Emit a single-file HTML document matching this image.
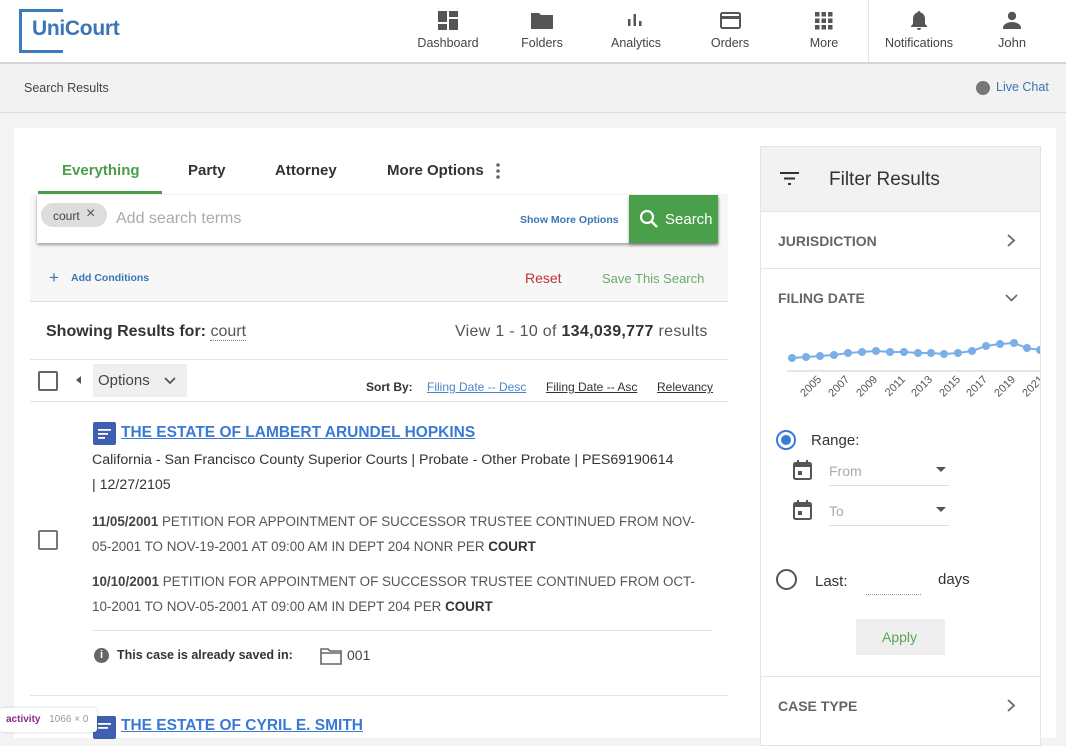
<!DOCTYPE html>
<html><head><meta charset="utf-8"><style>
*{box-sizing:border-box;margin:0;padding:0}
body{width:1066px;height:732px;overflow:hidden;background:#f4f4f4;font-family:"Liberation Sans",sans-serif;color:#333;position:relative}
.a{position:absolute}
.nav{position:absolute;top:0;left:0;width:1066px;height:64px;background:#fff;border-bottom:2px solid #d4d4d4}
.ni{position:absolute;top:36px;font-size:12.5px;color:#444;text-align:center;width:100px}
.card{position:absolute;left:14px;top:128px;width:1042px;height:610px;background:#fff}
</style></head><body>
<div class="nav">
 <div class="a" style="left:19px;top:9px;width:44px;height:44px;border:3px solid #3a7bbf;border-right:none"></div>
 <div class="a" style="left:26px;top:12px;width:40px;height:38px;background:#fff"></div>
 <div class="a" style="left:32px;top:17px;font-size:21px;font-weight:bold;color:#3a75b5;letter-spacing:-0.3px">UniCourt</div>
 <svg class="a" style="left:438px;top:11px" width="20" height="20" viewBox="0 0 20 20" fill="#555"><rect x="0" y="0" width="9" height="11"/><rect x="11" y="0" width="9" height="6"/><rect x="0" y="13" width="9" height="6"/><rect x="11" y="8" width="9" height="11"/></svg>
 <div class="ni" style="left:398px">Dashboard</div>
 <svg class="a" style="left:531px;top:11px" width="22" height="18" viewBox="0 0 22 18" fill="#555"><path d="M0 2h8l2 2h12v14H0z"/></svg>
 <div class="ni" style="left:492px">Folders</div>
 <svg class="a" style="left:627px;top:13px" width="16" height="14" viewBox="0 0 16 14" fill="#555"><rect x="1" y="6" width="2.5" height="7"/><rect x="6.5" y="1" width="2.5" height="12"/><rect x="12" y="8" width="2.5" height="5"/></svg>
 <div class="ni" style="left:586px">Analytics</div>
 <svg class="a" style="left:720px;top:12px" width="21" height="17" viewBox="0 0 21 17"><rect x="1" y="1" width="19" height="15" rx="1.5" fill="none" stroke="#555" stroke-width="2"/><rect x="1" y="4" width="19" height="3" fill="#555"/></svg>
 <div class="ni" style="left:680px">Orders</div>
 <svg class="a" style="left:815px;top:12px" width="18" height="18" viewBox="0 0 18 18" fill="#555"><rect x="0" y="0" width="4.5" height="4.5"/><rect x="6.5" y="0" width="4.5" height="4.5"/><rect x="13" y="0" width="4.5" height="4.5"/><rect x="0" y="6.5" width="4.5" height="4.5"/><rect x="6.5" y="6.5" width="4.5" height="4.5"/><rect x="13" y="6.5" width="4.5" height="4.5"/><rect x="0" y="13" width="4.5" height="4.5"/><rect x="6.5" y="13" width="4.5" height="4.5"/><rect x="13" y="13" width="4.5" height="4.5"/></svg>
 <div class="ni" style="left:774px">More</div>
 <div class="a" style="left:868px;top:0;width:1px;height:62px;background:#e4e4e4"></div>
 <svg class="a" style="left:910px;top:10px" width="18" height="20" viewBox="0 0 18 20" fill="#555"><path d="M9 1c1 0 1.5.7 1.5 1.5C13.5 3.3 15 6 15 9v5l2 2v1H1v-1l2-2V9c0-3 1.5-5.7 4.5-6.5C7.5 1.7 8 1 9 1zM7 18h4a2 2 0 0 1-4 0z"/></svg>
 <div class="ni" style="left:869px">Notifications</div>
 <svg class="a" style="left:1003px;top:11px" width="18" height="18" viewBox="0 0 18 18" fill="#555"><circle cx="9" cy="5" r="4.2"/><path d="M0 17c0-4 5-6 9-6s9 2 9 6v1H0z"/></svg>
 <div class="ni" style="left:962px;top:35px;font-size:13px">John</div>
</div>
<div class="a" style="top:66px;left:0;width:1066px;height:47px;background:#f2f2f2;border-bottom:1px solid #ddd"></div>
<div class="a" style="left:24px;top:81px;font-size:12.5px;color:#444">Search Results</div>
<div class="a" style="left:976px;top:81px;width:14px;height:14px;border-radius:50%;background:#777"></div>
<div class="a" style="left:996px;top:80px;font-size:12.5px;color:#3a75b5">Live Chat</div>

<div class="card"></div>
<div class="a" style="left:62px;top:162px;font-size:15px;font-weight:bold;color:#4a9e4a">Everything</div>
<div class="a" style="left:188px;top:162px;font-size:15px;font-weight:bold;color:#333">Party</div>
<div class="a" style="left:275px;top:162px;font-size:15px;font-weight:bold;color:#333">Attorney</div>
<div class="a" style="left:387px;top:162px;font-size:15px;font-weight:bold;color:#333">More Options</div>
<svg class="a" style="left:495px;top:162px" width="6" height="18"><circle cx="3" cy="3" r="1.8" fill="#666"/><circle cx="3" cy="9" r="1.8" fill="#666"/><circle cx="3" cy="15" r="1.8" fill="#666"/></svg>
<div class="a" style="left:38px;top:191px;width:124px;height:3px;background:#4a9e4a"></div>
<div class="a" style="left:30px;top:194px;width:698px;height:108px;background:#f7f7f7;border-bottom:1px solid #ddd"></div>
<div class="a" style="left:37px;top:195px;width:681px;height:48px;background:#fff;box-shadow:0 2px 3px rgba(0,0,0,.35)"></div>
<div class="a" style="left:41px;top:203px;width:66px;height:24px;border-radius:12px;background:#ddd"></div>
<div class="a" style="left:53px;top:209px;font-size:12px;color:#444">court</div>
<div class="a" style="left:86px;top:205px;font-size:16px;color:#555">×</div>
<div class="a" style="left:116px;top:210px;font-size:16px;color:#aaa">Add search terms</div>
<div class="a" style="left:520px;top:214px;font-size:10.5px;font-weight:bold;color:#3a75b5">Show More Options</div>
<div class="a" style="left:629px;top:195px;width:89px;height:48px;background:#4aa04a;box-shadow:0 2px 3px rgba(0,0,0,.3)"></div>
<svg class="a" style="left:639px;top:209px" width="20" height="20" viewBox="0 0 20 20"><circle cx="8" cy="8" r="6" fill="none" stroke="#fff" stroke-width="2.2"/><path d="M12.5 12.5l5.5 5.5" stroke="#fff" stroke-width="2.4"/></svg>
<div class="a" style="left:665px;top:211px;font-size:15px;color:#fff">Search</div>
<div class="a" style="left:49px;top:268px;font-size:17px;color:#3a75b5">+</div>
<div class="a" style="left:71px;top:272px;font-size:10.5px;font-weight:bold;color:#3a75b5">Add Conditions</div>
<div class="a" style="left:525px;top:270px;font-size:14px;color:#b33">Reset</div>
<div class="a" style="left:602px;top:271px;font-size:13px;color:#6aab6a">Save This Search</div>

<div class="a" style="left:46px;top:323px;font-size:16px;font-weight:bold;color:#333">Showing Results for: <span style="font-weight:normal;color:#555;border-bottom:1px dotted #777">court</span></div>
<div class="a" style="left:455px;top:323px;font-size:16px;color:#555;letter-spacing:.3px">View 1 - 10 of <b style="color:#333">134,039,777</b> results</div>
<div class="a" style="left:30px;top:359px;width:698px;height:1px;background:#e4e4e4"></div>
<div class="a" style="left:38px;top:371px;width:20px;height:20px;border:2px solid #666;border-radius:2px"></div>
<div class="a" style="left:76px;top:376px;width:0;height:0;border:4px solid transparent;border-right:5px solid #555;border-left:0"></div>
<div class="a" style="left:93px;top:364px;width:94px;height:33px;background:#efefef"></div>
<div class="a" style="left:98px;top:372px;font-size:15px;color:#444">Options</div>
<svg class="a" style="left:164px;top:377px" width="12" height="8"><path d="M1 1l5 5 5-5" fill="none" stroke="#555" stroke-width="1.8"/></svg>
<div class="a" style="left:366px;top:380px;font-size:12px;font-weight:bold;color:#333">Sort By:</div>
<div class="a" style="left:427px;top:380px;font-size:12px;color:#4a85c5;text-decoration:underline">Filing Date -- Desc</div>
<div class="a" style="left:546px;top:380px;font-size:12px;color:#333;text-decoration:underline">Filing Date -- Asc</div>
<div class="a" style="left:657px;top:380px;font-size:12px;color:#333;text-decoration:underline">Relevancy</div>
<div class="a" style="left:30px;top:401px;width:698px;height:1px;background:#e4e4e4"></div>

<svg class="a" style="left:93px;top:422px" width="23" height="23" viewBox="0 0 23 23"><rect width="23" height="23" rx="2" fill="#3f5fb0"/><rect x="5" y="7" width="13" height="1.8" fill="#fff"/><rect x="5" y="11" width="10" height="1.8" fill="#fff"/><rect x="5" y="15" width="7" height="1.8" fill="#fff"/></svg>
<div class="a" style="left:121px;top:424px;font-size:15.5px;font-weight:bold;color:#3a7ad5;text-decoration:underline">THE ESTATE OF LAMBERT ARUNDEL HOPKINS</div>
<div class="a" style="left:92px;top:448px;width:624px;font-size:14.2px;line-height:25px;color:#333">California - San Francisco County Superior Courts | Probate - Other Probate | PES69190614<br>| 12/27/2105</div>
<div class="a" style="left:38px;top:530px;width:20px;height:20px;border:2px solid #777;border-radius:2px"></div>
<div class="a" style="left:92px;top:509px;width:610px;font-size:13.4px;line-height:25px;color:#555">
<b style="color:#444">11/05/2001</b> PETITION FOR APPOINTMENT OF SUCCESSOR TRUSTEE CONTINUED FROM NOV-<br>05-2001 TO NOV-19-2001 AT 09:00 AM IN DEPT 204 NONR PER <b style="color:#333">COURT</b></div>
<div class="a" style="left:92px;top:569px;width:610px;font-size:13.4px;line-height:25px;color:#555">
<b style="color:#444">10/10/2001</b> PETITION FOR APPOINTMENT OF SUCCESSOR TRUSTEE CONTINUED FROM OCT-<br>10-2001 TO NOV-05-2001 AT 09:00 AM IN DEPT 204 PER <b style="color:#333">COURT</b></div>
<div class="a" style="left:92px;top:630px;width:620px;height:1px;background:#e4e4e4"></div>
<div class="a" style="left:94px;top:648px;width:15px;height:15px;border-radius:50%;background:#666;color:#fff;font-size:11px;font-weight:bold;text-align:center;line-height:15px">i</div>
<div class="a" style="left:117px;top:648px;font-size:12.5px;font-weight:bold;color:#333">This case is already saved in:</div>
<svg class="a" style="left:320px;top:648px" width="22" height="17"><path d="M1 1h7l2 2h11v13H1z" fill="none" stroke="#666" stroke-width="1.6"/><path d="M1 5h20" stroke="#666" stroke-width="1.4"/></svg>
<div class="a" style="left:347px;top:647px;font-size:14px;color:#444">001</div>
<div class="a" style="left:30px;top:695px;width:698px;height:1px;background:#e4e4e4"></div>
<svg class="a" style="left:93px;top:716px" width="23" height="23" viewBox="0 0 23 23"><rect width="23" height="23" rx="2" fill="#3f5fb0"/><rect x="5" y="7" width="13" height="1.8" fill="#fff"/><rect x="5" y="11" width="10" height="1.8" fill="#fff"/></svg>
<div class="a" style="left:121px;top:717px;font-size:15.5px;font-weight:bold;color:#3a7ad5;text-decoration:underline">THE ESTATE OF CYRIL E. SMITH</div>
<div class="a" style="left:0;top:708px;width:97px;height:24px;background:#fff;border-radius:3px;box-shadow:0 0 3px rgba(0,0,0,.2)"></div>
<div class="a" style="left:6px;top:714px;font-size:10px;font-weight:bold;color:#8a2b8a">activity <span style="font-weight:normal;color:#999;margin-left:6px">1066 × 0</span></div>

<div class="a" style="left:760px;top:146px;width:281px;height:600px;border:1px solid #e4e4e4;background:#fff"></div>
<div class="a" style="left:761px;top:147px;width:279px;height:65px;background:#f2f2f2;border-bottom:1px solid #e4e4e4"></div>
<svg class="a" style="left:780px;top:172px" width="20" height="14"><rect x="0" y="0" width="19" height="2" fill="#333"/><rect x="4" y="5.5" width="11" height="2" fill="#333"/><rect x="8" y="11" width="3" height="2" fill="#333"/></svg>
<div class="a" style="left:829px;top:169px;font-size:19px;color:#333">Filter Results</div>
<div class="a" style="left:778px;top:233px;font-size:14px;font-weight:bold;color:#666">JURISDICTION</div>
<svg class="a" style="left:1006px;top:234px" width="10" height="13"><path d="M2 1l6 5.5L2 12" fill="none" stroke="#666" stroke-width="1.8"/></svg>
<div class="a" style="left:761px;top:268px;width:279px;height:1px;background:#e4e4e4"></div>
<div class="a" style="left:778px;top:290px;font-size:14px;font-weight:bold;color:#666">FILING DATE</div>
<svg class="a" style="left:1005px;top:294px" width="13" height="9"><path d="M1 1l5.5 5.5L12 1" fill="none" stroke="#666" stroke-width="1.6"/></svg>
<svg class="a" style="left:761px;top:330px" width="279" height="80" viewBox="761 330 279 80">
<line x1="787" y1="371" x2="1040" y2="371" stroke="#ccc"/>
<polyline fill="none" stroke="#7aaee6" stroke-width="2" points="792,358 806,357 820,356 834,355 848,353 862,352 876,351 890,352 904,352 918,353 931,353 944,354 958,353 972,351 986,346 1000,344 1014,343 1027,348 1040,350"/>
<g fill="#7aaee6"><circle cx="792" cy="358" r="4"/><circle cx="806" cy="357" r="4"/><circle cx="820" cy="356" r="4"/><circle cx="834" cy="355" r="4"/><circle cx="848" cy="353" r="4"/><circle cx="862" cy="352" r="4"/><circle cx="876" cy="351" r="4"/><circle cx="890" cy="352" r="4"/><circle cx="904" cy="352" r="4"/><circle cx="918" cy="353" r="4"/><circle cx="931" cy="353" r="4"/><circle cx="944" cy="354" r="4"/><circle cx="958" cy="353" r="4"/><circle cx="972" cy="351" r="4"/><circle cx="986" cy="346" r="4"/><circle cx="1000" cy="344" r="4"/><circle cx="1014" cy="343" r="4"/><circle cx="1027" cy="348" r="4"/><circle cx="1040" cy="350" r="4"/></g>
<g font-size="11" fill="#555" font-family="Liberation Sans">
<text transform="translate(822,380) rotate(-45)" text-anchor="end">2005</text>
<text transform="translate(850,380) rotate(-45)" text-anchor="end">2007</text>
<text transform="translate(878,380) rotate(-45)" text-anchor="end">2009</text>
<text transform="translate(906,380) rotate(-45)" text-anchor="end">2011</text>
<text transform="translate(933,380) rotate(-45)" text-anchor="end">2013</text>
<text transform="translate(961,380) rotate(-45)" text-anchor="end">2015</text>
<text transform="translate(988,380) rotate(-45)" text-anchor="end">2017</text>
<text transform="translate(1016,380) rotate(-45)" text-anchor="end">2019</text>
<text transform="translate(1044,380) rotate(-45)" text-anchor="end">2021</text>
</g></svg>
<div class="a" style="left:776px;top:430px;width:20px;height:20px;border:2px solid #3a7ad5;border-radius:50%"></div>
<div class="a" style="left:781px;top:435px;width:10px;height:10px;background:#3a7ad5;border-radius:50%"></div>
<div class="a" style="left:811px;top:432px;font-size:15px;color:#333">Range:</div>
<svg class="a" style="left:793px;top:460px" width="19" height="20"><rect x="1" y="3" width="17" height="16" rx="1.5" fill="none" stroke="#555" stroke-width="2"/><rect x="1" y="3" width="17" height="4" fill="#555"/><rect x="4" y="0" width="2" height="4" fill="#555"/><rect x="13" y="0" width="2" height="4" fill="#555"/><rect x="5" y="11" width="4" height="4" fill="#555"/></svg>
<div class="a" style="left:829px;top:463px;font-size:14px;color:#aaa">From</div>
<div class="a" style="left:936px;top:467px;border:5px solid transparent;border-top:5px solid #555;border-bottom:0"></div>
<div class="a" style="left:829px;top:485px;width:120px;height:1px;background:#ddd"></div>
<svg class="a" style="left:793px;top:500px" width="19" height="20"><rect x="1" y="3" width="17" height="16" rx="1.5" fill="none" stroke="#555" stroke-width="2"/><rect x="1" y="3" width="17" height="4" fill="#555"/><rect x="4" y="0" width="2" height="4" fill="#555"/><rect x="13" y="0" width="2" height="4" fill="#555"/><rect x="5" y="11" width="4" height="4" fill="#555"/></svg>
<div class="a" style="left:829px;top:503px;font-size:14px;color:#aaa">To</div>
<div class="a" style="left:936px;top:507px;border:5px solid transparent;border-top:5px solid #555;border-bottom:0"></div>
<div class="a" style="left:829px;top:525px;width:120px;height:1px;background:#ddd"></div>
<div class="a" style="left:776px;top:569px;width:21px;height:21px;border:2px solid #555;border-radius:50%"></div>
<div class="a" style="left:815px;top:573px;font-size:15px;color:#333">Last:</div>
<div class="a" style="left:866px;top:594px;width:55px;border-bottom:1px dotted #999"></div>
<div class="a" style="left:938px;top:571px;font-size:15px;color:#333">days</div>
<div class="a" style="left:856px;top:619px;width:89px;height:36px;background:#eee"></div>
<div class="a" style="left:882px;top:629px;font-size:14px;color:#5aa55a">Apply</div>
<div class="a" style="left:761px;top:676px;width:279px;height:1px;background:#e4e4e4"></div>
<div class="a" style="left:778px;top:698px;font-size:14px;font-weight:bold;color:#666">CASE TYPE</div>
<svg class="a" style="left:1006px;top:699px" width="10" height="13"><path d="M2 1l6 5.5L2 12" fill="none" stroke="#666" stroke-width="1.8"/></svg>
</body></html>
